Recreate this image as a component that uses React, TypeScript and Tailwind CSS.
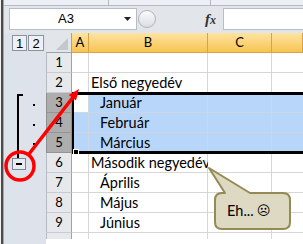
import React from 'react';

const F = { fontFamily: 'Lato, "Liberation Sans", sans-serif' };

type Row = { n: number; text?: string; indent?: boolean; sel?: boolean; active?: boolean };
const rows: Row[] = [
  { n: 1 },
  { n: 2, text: 'Első negyedév' },
  { n: 3, text: 'Január', indent: true, sel: true, active: true },
  { n: 4, text: 'Február', indent: true, sel: true },
  { n: 5, text: 'Március', indent: true, sel: true },
  { n: 6, text: 'Második negyedév' },
  { n: 7, text: 'Április', indent: true },
  { n: 8, text: 'Május', indent: true },
  { n: 9, text: 'Június', indent: true },
];

function Outline() {
  return (
    <div className="w-[42px] shrink-0 flex flex-col bg-[#dde2eb]">
      <div className="h-[20px] flex items-start pt-[2px] pl-[8px] gap-[1px]">
        <div className="w-[15px] h-[16px] border border-[#8a94a3] bg-[#eef0f4] flex items-center justify-center text-[13px] leading-none text-black" style={{ fontFamily: '"Liberation Sans", sans-serif' }}>1</div>
        <div className="w-[16px] h-[16px] border border-[#8a94a3] bg-[#eef0f4] flex items-center justify-center text-[13px] leading-none text-black" style={{ fontFamily: '"Liberation Sans", sans-serif' }}>2</div>
      </div>
      <div className="h-[40px]" />
      <div className="h-[60px] flex">
        <div className="ml-[13px] mt-[1px] w-[6px] h-[59px] border-l-2 border-t-2 border-black" />
        <div className="ml-[10px] flex flex-col">
          <div className="mt-[11px] w-[2px] h-[2px] bg-black" />
          <div className="mt-[18px] w-[2px] h-[2px] bg-black" />
          <div className="mt-[17px] w-[2px] h-[2px] bg-black" />
        </div>
      </div>
      <div className="flex flex-col">
        <div className="ml-[13px] w-[2px] h-[5px] bg-black" />
        <div className="ml-[8px] w-[14px] h-[12px] border border-[#7d8696] bg-[#e8ebef] flex items-center justify-center">
          <div className="w-[6px] h-[2px] bg-black" />
        </div>
      </div>
    </div>
  );
}

function ColHead({ w, label, grow }: { w?: string; label: string; grow?: boolean }) {
  return (
    <div
      className={`${w ?? ''} ${grow ? 'flex-1' : 'shrink-0'} h-full flex items-center justify-center border-r border-b border-[#dba04a] bg-gradient-to-b from-[#fee4a0] to-[#f7c44e] text-[13px] text-black`}
    >
      {label}
    </div>
  );
}

function SheetRow({ r }: { r: Row }) {
  const cellBg = r.sel ? 'bg-[#b8d6f9]' : 'bg-white';
  const aBg = r.active ? 'bg-white' : cellBg;
  const grid = r.sel ? 'border-[#cdd6e2]' : 'border-[#d6d6d6]';
  return (
    <div className="h-[20px] shrink-0 flex">
      <div
        className={`w-[26px] shrink-0 flex items-center justify-center border-l border-r border-b text-[13px] text-black ${
          r.sel ? 'bg-[#adadad] border-l-[#8f8f8f] border-r-[#8f8f8f] border-b-[#949494]' : 'bg-[#e6e8ec] border-l-[#b7bcc4] border-r-[#9ba3ad] border-b-[#c8ccd2]'
        }`}
      >
        {r.n}
      </div>
      <div className={`w-[17px] shrink-0 border-r border-b ${grid} ${aBg}`} />
      <div
        className={`w-[119px] shrink-0 border-r border-b ${grid} ${cellBg} flex items-center whitespace-nowrap text-[14.5px] text-black ${
          r.indent ? 'pl-[11px]' : 'pl-[2px]'
        }`}
      >
        {r.text}
      </div>
      <div className={`w-[64px] shrink-0 border-r border-b ${grid} ${cellBg}`} />
      <div className={`flex-1 border-b ${grid} ${cellBg}`} />
    </div>
  );
}

function Sheet() {
  return (
    <div className="flex-1 min-w-0 flex flex-col bg-white">
      <div className="h-[20px] shrink-0 flex">
        <div className="w-[26px] shrink-0 h-full bg-[#e2e5ea] border-r border-b border-[#9ba3ad] flex items-end justify-end pr-[3px] pb-[2px]">
          <svg width="12" height="12" viewBox="0 0 12 12">
            <polygon points="12,0 12,12 0,12" fill="#c3c8cf" />
          </svg>
        </div>
        <ColHead w="w-[17px]" label="A" />
        <ColHead w="w-[119px]" label="B" />
        <ColHead w="w-[64px]" label="C" />
        <ColHead label="" grow />
      </div>
      {rows.map((r) => (
        <SheetRow key={r.n} r={r} />
      ))}
      <div className="h-[6px] shrink-0 flex">
        <div className="w-[26px] shrink-0 bg-[#e6e8ec] border-l border-r border-l-[#b7bcc4] border-r-[#9ba3ad]" />
        <div className="w-[17px] shrink-0 border-r border-[#d6d6d6]" />
        <div className="w-[119px] shrink-0 border-r border-[#d6d6d6]" />
        <div className="w-[64px] shrink-0 border-r border-[#d6d6d6]" />
        <div className="flex-1" />
      </div>
    </div>
  );
}

export default function App() {
  return (
    <div className="relative w-[303px] h-[244px] overflow-hidden flex bg-[#e2e6eb]" style={F}>
      <div className="flex h-full shrink-0">
        <div className="w-px bg-[#f2f2f2]" />
        <div className="w-[2px] bg-[#4b4b4b]" />
        <div className="w-px bg-[#a3a7ad]" />
      </div>
      <div className="flex-1 flex flex-col min-w-0">
        <div className="h-[6px] shrink-0 flex border-b border-[#b3bac4] bg-[#eceff3]">
          <div className="w-[104px]" />
          <div className="w-px bg-[#b3bac4]" />
          <div className="w-[101px]" />
          <div className="w-px bg-[#b3bac4]" />
        </div>
        <div className="h-[2px] shrink-0" />
        <div className="h-[22px] shrink-0 flex items-stretch">
          <div className="ml-[5px] w-[128px] flex bg-white border border-[#b6bdc7]">
            <div className="flex-1 flex items-center justify-center text-[13px] text-black pl-[4px]" style={{ fontFamily: '"Liberation Sans", sans-serif' }}>
              A3
            </div>
            <div className="w-[18px] flex items-center justify-center">
              <svg width="7" height="4" viewBox="0 0 7 4">
                <polygon points="0,0 7,0 3.5,4" fill="#222" />
              </svg>
            </div>
          </div>
          <div className="ml-[1px] w-[18px] h-[18px] self-center rounded-full border border-[#aeb4bd] bg-gradient-to-b from-[#fbfbfc] to-[#dadde2]" />
          <div className="flex-1 flex items-center justify-end pr-[7px]">
            <span className="italic font-bold text-[15px] text-[#333] leading-none" style={{ fontFamily: '"Liberation Serif", serif' }}>
              f<span className="text-[12px]">x</span>
            </span>
          </div>
          <div className="w-[80px] bg-white border-y border-l border-[#b6bdc7]" />
        </div>
        <div className="h-[3px] shrink-0" />
        <div className="flex-1 flex min-h-0">
          <Outline />
          <Sheet />
        </div>
      </div>

      {/* selection border */}
      <div className="absolute left-[72px] top-[92px] right-[-6px] h-[62px] border-l-2 border-t-[3px] border-b-[3px] border-black pointer-events-none" />
      <div className="absolute left-[73px] top-[149px] w-[6px] h-[6px] bg-black border border-white pointer-events-none" />

      {/* annotations */}
      <svg className="absolute left-0 top-0 pointer-events-none" width="303" height="244" viewBox="0 0 303 244">
        <circle cx="20" cy="166" r="14" fill="none" stroke="#ff0000" strokeWidth="3.5" />
        <line x1="29" y1="154" x2="74" y2="96" stroke="#ff0000" strokeWidth="3.5" />
        <polygon points="79,89 76,100.5 68.8,95.1" fill="#ff0000" />
        <path
          d="M 222 193 L 225 193 L 209 168 L 250 193 L 283 193 Q 290 193 290 200 L 290 222 Q 290 229 283 229 L 222 229 Q 215 229 215 222 L 215 200 Q 215 193 222 193 Z"
          fill="#ddd9c3"
          stroke="#948a54"
          strokeWidth="2"
          strokeLinejoin="round"
        />
      </svg>
      <div className="absolute left-[215px] top-[193px] w-[75px] h-[36px] flex items-center pl-[12px] text-[14.5px] text-black whitespace-nowrap pointer-events-none">
        Eh...<span className="ml-[3px] text-[13px]" style={{ fontFamily: '"DejaVu Sans", sans-serif' }}>☹</span>
      </div>
    </div>
  );
}
